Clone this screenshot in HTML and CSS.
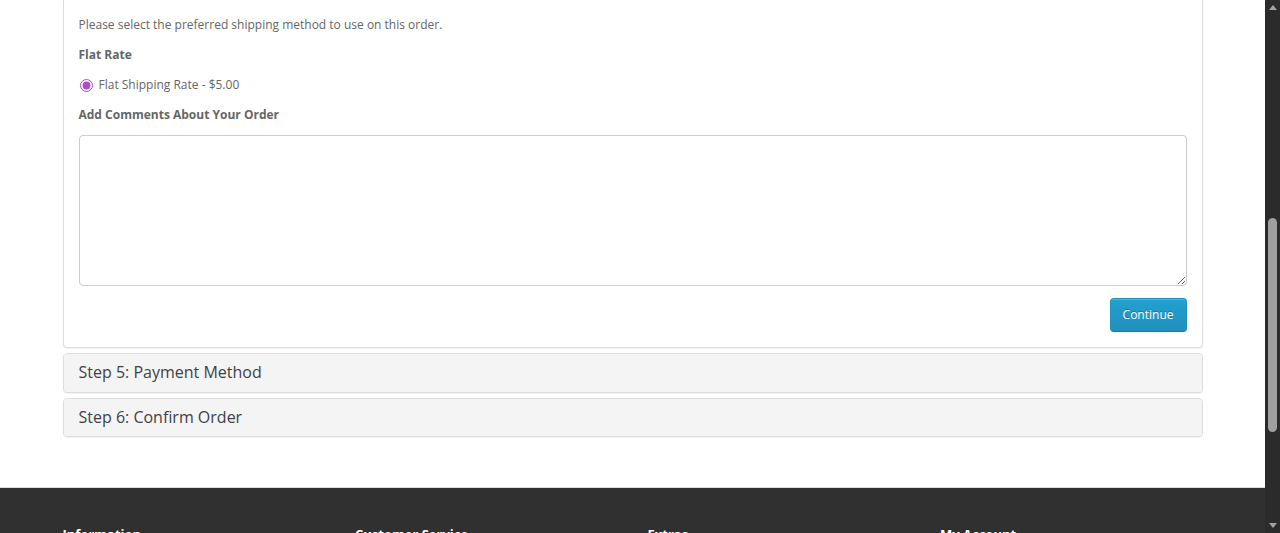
FILE: index.html
```html
<!DOCTYPE html>
<html lang="en">
<head>
<meta charset="utf-8">
<title>Checkout</title>
<link rel="stylesheet" href="styles.css">
</head>
<body>
<div class="viewport">
  <main class="page">
    <div class="container">
      <div class="panel-group">
        <div class="panel panel-open">
          <div class="panel-body">
            <p>Please select the preferred shipping method to use on this order.</p>
            <p><strong>Flat Rate</strong></p>
            <div class="radio"><label><input type="radio" name="shipping" checked> Flat Shipping Rate - $5.00</label></div>
            <p><strong>Add Comments About Your Order</strong></p>
            <textarea class="comment" name="comment"></textarea>
            <div class="buttons"><button class="btn-primary" type="button">Continue</button></div>
          </div>
        </div>
        <div class="panel"><div class="panel-heading">Step 5: Payment Method</div></div>
        <div class="panel"><div class="panel-heading">Step 6: Confirm Order</div></div>
      </div>
    </div>
    <footer class="site-footer">
      <div class="container footer-cols">
        <div class="fcol"><h5>Information</h5></div>
        <div class="fcol"><h5>Customer Service</h5></div>
        <div class="fcol"><h5>Extras</h5></div>
        <div class="fcol"><h5>My Account</h5></div>
      </div>
    </footer>
  </main>
  <div class="scrollbar" aria-hidden="true">
    <div class="sb-btn"><span class="tri tri-up"></span></div>
    <div class="sb-track"><div class="sb-thumb"></div></div>
    <div class="sb-btn"><span class="tri tri-down"></span></div>
  </div>
</div>
</body>
</html>
```

FILE: styles.css
```css
html, body {
  margin: 0;
  padding: 0;
  background: #fff;
}
body {
  font-family: "Open Sans", "DejaVu Sans", sans-serif;
  font-size: 12px;
  line-height: 20px;
  color: #666;
}
.viewport {
  display: flex;
  height: 533px;
  overflow: hidden;
}
.page {
  flex: 1;
  min-width: 0;
  overflow: hidden;
}
.container {
  width: 1140px;
  margin: 0 auto;
  padding: 0 15px;
}
.panel-group {
  margin-bottom: 20px;
}
.panel {
  border: 1px solid #ddd;
  border-radius: 4px;
  background: #fff;
  box-shadow: 0 1px 1px rgba(0, 0, 0, 0.05);
  overflow: hidden;
}
.panel-open {
  border-top: 0;
  border-top-left-radius: 0;
  border-top-right-radius: 0;
}
.panel + .panel {
  margin-top: 5px;
}
.panel-heading {
  background: #f4f4f4;
  padding: 10px 15px;
  font-size: 16px;
  line-height: 1.1;
  color: #3d4249;
}
.panel-body {
  padding: 15px 15px 15px;
}
.panel-body p {
  margin: 0 0 10px;
}
.panel-body strong {
  font-weight: bold;
}
.radio {
  margin: 0 0 10px;
}
.radio label {
  display: flex;
  align-items: center;
  gap: 6px;
}
.radio input {
  margin: 1px 0 0 1px;
  width: 13px;
  height: 13px;
  accent-color: #b04ccf;
}
.comment {
  display: block;
  box-sizing: border-box;
  width: 100%;
  height: 151px;
  margin: 0;
  border: 1px solid #ccc;
  border-radius: 4px;
  background: #fff;
  font-family: inherit;
  font-size: 12px;
  resize: vertical;
}
.buttons {
  display: flex;
  justify-content: flex-end;
  margin-top: 12px;
}
.btn-primary {
  font-family: "Open Sans", "DejaVu Sans", sans-serif;
  font-size: 12px;
  line-height: 20px;
  color: #fff;
  background: linear-gradient(#23a1d1, #1f90bb);
  border: 1px solid #1f90bb;
  border-bottom-color: #1a7aa0;
  border-radius: 4px;
  padding: 6px 12px;
  height: 34px;
  text-shadow: 0 -1px 0 rgba(0, 0, 0, 0.25);
  box-shadow: inset 0 1px 0 rgba(255, 255, 255, 0.2), 0 1px 2px rgba(0, 0, 0, 0.05);
}
.site-footer {
  margin-top: 50px;
  border-top: 1px solid #ddd;
  background: #303030;
  padding-top: 29px;
  height: 200px;
}
.footer-cols {
  display: grid;
  grid-template-columns: repeat(4, 1fr);
  column-gap: 30px;
}
.fcol h5 {
  font-size: 13px;
  font-weight: bold;
  color: #fff;
  margin: 10px 0 10px;
  line-height: 1.1;
}
.scrollbar {
  width: 15px;
  flex: 0 0 15px;
  display: flex;
  flex-direction: column;
  background: #2b2b2b;
}
.sb-btn {
  height: 15px;
  flex: 0 0 15px;
  display: flex;
  align-items: center;
  justify-content: center;
}
.tri {
  width: 0;
  height: 0;
  border-left: 4px solid transparent;
  border-right: 4px solid transparent;
}
.tri-up {
  border-bottom: 5px solid #a3a3a3;
}
.tri-down {
  border-top: 5px solid #a3a3a3;
}
.sb-track {
  flex: 1;
  display: flex;
  flex-direction: column;
  align-items: center;
}
.sb-thumb {
  margin-top: 203px;
  width: 9px;
  height: 214px;
  border-radius: 5px;
  background: #9f9f9f;
}
```
